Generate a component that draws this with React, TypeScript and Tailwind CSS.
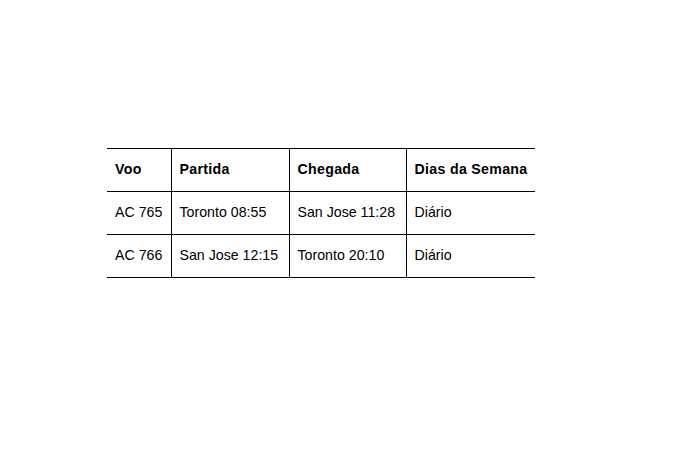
const rows = [
  ['AC 765', 'Toronto 08:55', 'San Jose 11:28', 'Diário'],
  ['AC 766', 'San Jose 12:15', 'Toronto 20:10', 'Diário'],
]

const header = ['Voo', 'Partida', 'Chegada', 'Dias da Semana']
const widths = ['w-[64px]', 'w-[118px]', 'w-[117px]', 'w-[129px]']

export default function App() {
  return (
    <div className="min-h-[466px] bg-white pl-[107px] pt-[148px] font-['Liberation_Sans',Arial,sans-serif] text-[14.2px] text-black">
      <table className="w-[428px] table-fixed border-collapse">
        <thead>
          <tr className="h-[43px] border-y border-black">
            {header.map((h, i) => (
              <th
                key={h}
                className={`${widths[i]} whitespace-nowrap px-2 text-left font-bold tracking-[0.3px] ${i < 3 ? 'border-r border-black' : ''}`}
              >
                {h}
              </th>
            ))}
          </tr>
        </thead>
        <tbody>
          {rows.map((r) => (
            <tr key={r[0]} className="h-[43px] border-b border-black">
              {r.map((c, i) => (
                <td key={i} className={`whitespace-nowrap px-2 ${i < 3 ? 'border-r border-black' : ''}`}>
                  {c}
                </td>
              ))}
            </tr>
          ))}
        </tbody>
      </table>
    </div>
  )
}
